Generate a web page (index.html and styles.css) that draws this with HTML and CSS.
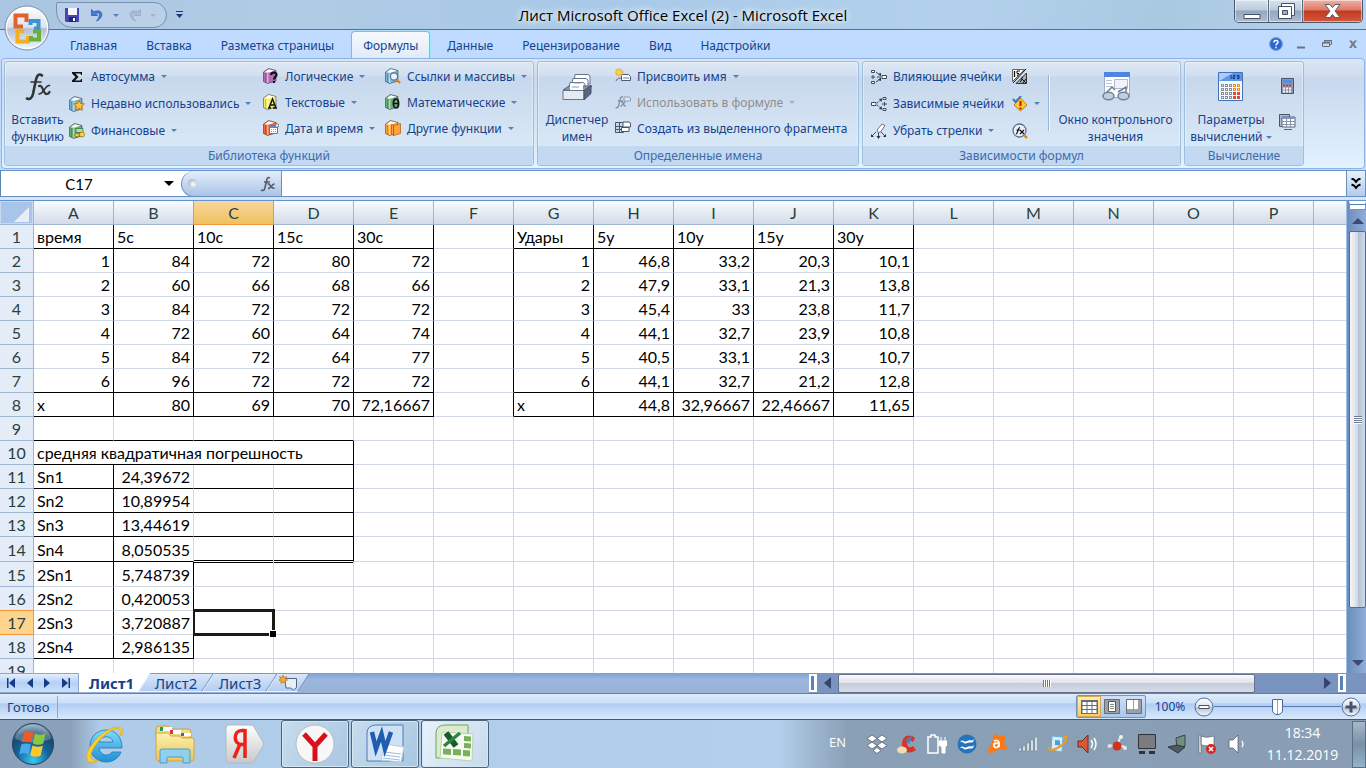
FILE: index.html
```html
<!DOCTYPE html>
<html lang="ru">
<head>
<meta charset="utf-8">
<title>Лист Microsoft Office Excel (2) - Microsoft Excel</title>
<link rel="stylesheet" href="styles.css">
</head>
<body>
<svg class="defs" aria-hidden="true">
  <defs>
    <linearGradient id="orb" x1="0" y1="0" x2="0" y2="1"><stop offset="0" stop-color="#fff"/><stop offset=".48" stop-color="#dbe3ee"/><stop offset=".52" stop-color="#b4c1d4"/><stop offset="1" stop-color="#f4f8fd"/></linearGradient>
    <radialGradient id="start" cx=".5" cy=".9" r=".9"><stop offset="0" stop-color="#38c8f0"/><stop offset=".45" stop-color="#12649c"/><stop offset=".75" stop-color="#1b486e"/><stop offset="1" stop-color="#8fb0c8"/></radialGradient>
    <linearGradient id="folder" x1="0" y1="0" x2="0" y2="1"><stop offset="0" stop-color="#fdf0b0"/><stop offset="1" stop-color="#e8c75c"/></linearGradient>
    <linearGradient id="silver" x1="0" y1="0" x2="0" y2="1"><stop offset="0" stop-color="#fff"/><stop offset="1" stop-color="#c6c8cc"/></linearGradient>
    <linearGradient id="ie" x1="0" y1="0" x2="0" y2="1"><stop offset="0" stop-color="#7fdcf8"/><stop offset="1" stop-color="#1e8ed6"/></linearGradient>
  </defs>
  <symbol id="book" viewBox="0 0 16 16"><path d="M.5 4 5.500.500l7.500 2V13l-8.500 2.500-4-2z" fill="currentColor" stroke="#000" stroke-opacity=".4"/><path d="M1.500 4.200 5.700 1.300l6 1.500L5 4.800z" fill="#fff"/><path d="M4.800 5.500v9.500" stroke="#fff" stroke-opacity=".7"/><path d="M2.500 5v9" stroke="#000" stroke-opacity=".2"/></symbol>
</svg>
<div class="app">
  <header class="titlebar">
    <div class="qat-wrap">
      <div class="qat">
        <button class="icon-btn" aria-label="Сохранить"><svg width="14" height="14" viewBox="0 0 14 14"><path d="M0 0h14v14H1l-1-1z" fill="#4a45b4"/><path d="M3 0h9v7H3z" fill="#f3f6ff"/><path d="M4 9h7v5H4z" fill="#222860"/><path d="M8 10h2v3H8z" fill="#fff"/></svg></button>
        <button class="icon-btn undo" aria-label="Отменить"><svg width="13" height="13" viewBox="0 0 13 13"><path d="M.5.500v6h6L4.700 4.800C8 2.500 10.500 6 5.500 12 13.500 8.500 12.500-1 3 2.700z" fill="#4a7ade" stroke="#2850a8" stroke-width=".7"/></svg></button>
        <i class="arrow"></i>
        <button class="icon-btn redo" aria-label="Вернуть" disabled><svg width="13" height="13" viewBox="0 0 13 13"><path d="M12.500.500v6h-6l1.800-1.700C5 2.500 2.500 6 7.500 12-.5 8.500.5-1 10 2.700z" fill="#a9bbd3" stroke="#8fa5c2" stroke-width=".7"/></svg></button>
        <i class="arrow dim"></i>
      </div>
      <button class="icon-btn" aria-label="Настройка панели"><svg width="7" height="8" viewBox="0 0 7 8"><path d="M0 0h7v1H0zM0 3h7L3.500 7z" fill="#1c3c78"/></svg></button>
    </div>
    <h1 class="title">Лист Microsoft Office Excel (2) - Microsoft Excel</h1>
    <div class="win-controls">
      <button aria-label="Свернуть"><svg width="18" height="16" viewBox="0 0 18 16"><path d="M1 11.500h16v4H1z" fill="#fff" stroke="#445064"/></svg></button>
      <button aria-label="Восстановить"><svg width="18" height="18" viewBox="0 0 18 18"><path d="M4.500 1.500h13v12h-13z" fill="#fff" stroke="#445064"/><path d="M1.500 4.500h13v12h-13z" fill="#fff" stroke="#445064"/><path d="M5.500 8.500h5v4h-5z" fill="#9fb1c5" stroke="#445064"/></svg></button>
      <button class="close" aria-label="Закрыть"><svg width="17" height="14" viewBox="0 0 17 14"><path d="M1 .5h5l2.500 3 2.500-3h5L11 7l5 6.500h-5l-2.500-3-2.500 3H1L6 7z" fill="#fff" stroke="#565e70"/></svg></button>
    </div>
    <button class="office" aria-label="Office"><svg width="46" height="46" viewBox="0 0 46 46"><circle cx="23" cy="23" r="22" fill="url(#orb)" stroke="#8090a8"/><circle cx="23" cy="23" r="20.500" fill="none" stroke="#fff"/><g fill="none" stroke-width="4"><path d="M19 21.500h-7.500v-11h11V17" stroke="#e5602a"/><path d="M26.500 20v-4h8v7.500H30" stroke="#3f94d0"/><path d="M20 26h-6.500v10.500H24V31" stroke="#f0b020"/><path d="M29 26.500h6v8h-8V31" stroke="#6ab038"/></g></svg></button>
  </header>
  <nav class="tabs">
    <button>Главная</button><button>Вставка</button><button>Разметка страницы</button><button class="active">Формулы</button><button>Данные</button><button>Рецензирование</button><button>Вид</button><button>Надстройки</button>
    <div class="doc-controls">
      <button aria-label="Справка"><svg width="14" height="14" viewBox="0 0 14 14"><circle cx="7" cy="7" r="6.500" fill="#2b67d4" stroke="#fff"/><circle cx="7" cy="7" r="6.500" fill="none" stroke="#2450a0" stroke-width=".6"/><path d="M4.800 5.500C5 2.500 9.500 3 9 5.500 8.500 6.800 7 6.800 7 8.500M7 9.700v1.600" stroke="#fff" stroke-width="1.500" fill="none"/></svg></button>
      <button aria-label="Свернуть книгу"><svg width="10" height="10" viewBox="0 0 10 10"><path d="M1 7.500h8v2H1z" fill="#6b7077"/></svg></button>
      <button aria-label="Восстановить книгу"><svg width="10" height="10" viewBox="0 0 10 10"><path d="M2.500 3V1.500h7v4H8M.5 3.500h7v4h-7z" fill="none" stroke="#6b7077"/><path d="M1 3h7v1.500H1zM2 1h8v1.500H2z" fill="#6b7077"/></svg></button>
      <button aria-label="Закрыть книгу"><svg width="10" height="10" viewBox="0 0 10 10"><path d="M1 1.500h2.500l1.500 2 1.500-2H9L6.300 5 9 9H6.500L5 6.500 3.500 9H1l2.700-4z" fill="#777c83"/></svg></button>
    </div>
  </nav>
  <div class="ribbon">
    <div class="panel">
      <section class="group g-lib">
        <div class="body">
          <button class="big"><svg width="30" height="30" viewBox="0 0 30 30"><g fill="none" stroke="#333" stroke-linecap="round"><path d="M19 3.500c-3-2.500-5 0-6 4L10 22c-1 4-3 6-6 4.500" stroke-width="2.600"/><path d="M8 10h10" stroke-width="1.600"/><path d="M16 14c4-2 4 9 8 8 1.500 0 2-1 2.500-2" stroke-width="2.200"/><path d="M26.500 13.500c-4-1-6 8.500-10.500 8.500" stroke-width="1.600"/></g></svg><span>Вставить<br>функцию</span></button>
          <div class="col wide">
            <button><svg width="16" height="16" viewBox="0 0 16 16"><path d="M3 3h10v3h-1l-.5-1.500h-5L9.500 8 6 11.500h5.500L12 10h1v3H3v-1.500L6.500 8 3 4.500z" fill="#111"/></svg>Автосумма<i class="arrow"></i></button>
            <button><svg class="c-blue" width="16" height="16" viewBox="0 0 16 16"><use href="#book"/><path d="m10 4 1.500 3.500 4 .3-3 2.600.9 4L10 12.200 6.500 14.400l1-4-3-2.600 4-.3z" fill="#ffc42c" stroke="#c06a10" stroke-width=".8"/></svg>Недавно использовались<i class="arrow"></i></button>
            <button><svg class="c-green" width="16" height="16" viewBox="0 0 16 16"><use href="#book"/><path d="M7 5.500h7v4H7z" fill="#b6dca0" stroke="#2b703c" stroke-width=".7"/><ellipse cx="8" cy="12" rx="2.500" ry="1.500" fill="#ffd24a" stroke="#8a6510" stroke-width=".7"/><ellipse cx="13" cy="11.500" rx="2.500" ry="2.500" fill="#ffd24a" stroke="#8a6510" stroke-width=".7"/></svg>Финансовые<i class="arrow"></i></button>
          </div>
          <div class="col">
            <button><svg class="c-purple" width="16" height="16" viewBox="0 0 16 16"><use href="#book"/><path d="M8 7c.5-3.500 6-3 5.500 0C13 9 11 9 11 11.500M11 13v2" stroke="#111" stroke-width="2.200" fill="none"/></svg>Логические<i class="arrow"></i></button>
            <button><svg class="c-yellow" width="16" height="16" viewBox="0 0 16 16"><use href="#book"/><path d="M5 14h3M10 14h4M6 14l3.500-9L13 14M7.500 11h4" stroke="#111" stroke-width="1.400" fill="none"/></svg>Текстовые<i class="arrow"></i></button>
            <button><svg class="c-red" width="16" height="16" viewBox="0 0 16 16"><use href="#book"/><path d="M6.500 5.500h8v8h-8z" fill="#fff" stroke="#567ab8"/><path d="M7 6h7v2H7z" fill="#5a8ad8"/><path d="M8 9.500h6M8 11.500h6" stroke="#7da0d8" stroke-dasharray="1 1"/><circle cx="14" cy="5.500" r="1.800" fill="#eee" stroke="#555" stroke-width=".7"/></svg>Дата и время<i class="arrow"></i></button>
          </div>
          <div class="col">
            <button><svg class="c-blue" width="16" height="16" viewBox="0 0 16 16"><use href="#book"/><circle cx="9" cy="8.500" r="3.600" fill="#e8f4fc" stroke="#5b7694" stroke-width="1.200"/><path d="m12 12 3 3" stroke="#e08020" stroke-width="2.400"/></svg>Ссылки и массивы<i class="arrow"></i></button>
            <button><svg class="c-green" width="16" height="16" viewBox="0 0 16 16"><use href="#book"/><ellipse cx="11" cy="9.500" rx="2.600" ry="4.500" fill="none" stroke="#111" stroke-width="1.700"/><path d="M9 9.500h4" stroke="#111" stroke-width="1.300"/></svg>Математические<i class="arrow"></i></button>
            <button><svg class="c-orange" width="16" height="16" viewBox="0 0 16 16"><use href="#book"/><path d="M6.500 4.500 8.500 5.500v10l-2-1.500zM8.500 5.500l7-2v10l-7 2z" fill="#ffa33a" stroke="#a85a10" stroke-width=".7"/></svg>Другие функции<i class="arrow"></i></button>
          </div>
        </div>
        <h2>Библиотека функций</h2>
      </section>
      <section class="group g-names">
        <div class="body">
          <button class="big"><svg width="30" height="30" viewBox="0 0 30 30"><g fill="#fff" stroke="#65748c"><path d="M13 2.500h13l2 1.500v8H12z"/><path d="M11 6.500h13l2 1.500v7H9z"/><path d="M8 10.500h13l2 1.500v7H6z"/></g><path d="M1 18 7 14h23l-7 5z" fill="#8895aa" stroke="#55637b"/><path d="M8 12h13v6H8z" fill="#fff"/><path d="M1 18.500h21v9H1z" fill="#e6ebf3" stroke="#66748c"/><path d="m22 18.500 7-5v8l-7 6.500z" fill="#58657c" stroke="#44516a"/><path d="M10 15h7M12 11h7" stroke="#8a98ae"/></svg><span>Диспетчер<br>имен</span></button>
          <div class="col">
            <button><svg width="16" height="16" viewBox="0 0 16 16"><path d="M6.500 6.500h7l2 2v4h-9z" fill="#fff" stroke="#4e5d74"/><path d="M8 10h6" stroke="#6a7c98"/><path d="m4 0 1 2.500L7 1 6.500 3.500 9 4 6.500 5 7 7.500 5 6 4 8.500 3 6 1 7.500 1.500 5-.5 4l2-.5L1 1l2 1.500z" fill="#ffd33c" stroke="#d89a18" stroke-width=".5"/><path d="M1 13c2-4 3-2 5-3" stroke="#55637a" fill="none"/></svg>Присвоить имя<i class="arrow"></i></button>
            <button disabled><svg width="16" height="16" viewBox="0 0 16 16"><path d="M8 3C6 2 5.500 4 5 6l-1.500 6C3 14 2 14 .5 13.500M3 7h5M6 8c3-1 2 5 5 4M10.500 8C8 8 8 12 5.500 12.500" stroke="#8290a8" stroke-width="1.300" fill="none"/><path d="M9 3h5l1.500 1v3H9z" fill="#dfe6f0" stroke="#8d9bb4"/></svg>Использовать в формуле<i class="arrow dim"></i></button>
            <button><svg width="16" height="16" viewBox="0 0 16 16"><path d="M.5 2.500h8v4h-8zM.5 6.500h8v6h-8zM4.500 2.500v10M.5 9.500h8" fill="#c9d6e8" stroke="#46566e"/><path d="M8 2h6l1.500 1v4H8zM6.500 7.500H14v4H6.500z" fill="#fff" stroke="#46566e"/></svg>Создать из выделенного фрагмента</button>
          </div>
        </div>
        <h2>Определенные имена</h2>
      </section>
      <section class="group g-audit">
        <div class="body">
          <div class="col wide">
            <button><svg width="16" height="16" viewBox="0 0 16 16"><path d="M.5 1.500h3v2h-3zM.5 12.500h3v2h-3zM11 6.500h4.500v3H11zM0 8h4M2 6v4" fill="#fff" stroke="#3c4c64"/><path d="m5 3 5 4M5 13l5-4M6 8h4" stroke="#3c4c64" fill="none"/><path d="m7 5 3 2 0-3zM7 11l3-2v3z" fill="#26354c"/></svg>Влияющие ячейки</button>
            <button><svg width="16" height="16" viewBox="0 0 16 16"><path d="M.5 6.500H5v3H.500zM12 1.500h3v2h-3zM12 12.500h3v2h-3zM11 8h5M13.500 6v4" fill="#fff" stroke="#3c4c64"/><path d="m6 7 5-4M6 9l5 4" stroke="#3c4c64" stroke-dasharray="2 1" fill="none"/><path d="m8 3 3-.5L10.500 6zM8 13l3 .5-.5-3.500z" fill="#26354c"/></svg>Зависимые ячейки</button>
            <button><svg width="16" height="16" viewBox="0 0 16 16"><path d="m6 7 5-6 3 1.500L9.500 9 7 9.500z" fill="#fff" stroke="#65748c"/><path d="M5 9 1 13M7.500 10v5M10 9l4 4" stroke="#3c4c64" fill="none"/><path d="M0 11v3h3zM5.500 13h4l-2 3zM12 14h3v-3z" fill="#26354c"/></svg>Убрать стрелки<i class="arrow"></i></button>
          </div>
          <div class="col wide icons">
            <button aria-label="Показать формулы"><svg width="16" height="16" viewBox="0 0 16 16"><path d="M.5.500h12l-12 12z" fill="#fff" stroke="#666"/><path d="M4 14.500h10.500V4z" fill="#a9adb3" stroke="#333"/><path d="M2.500 2v6" stroke="#111" stroke-width="1.300"/><path d="M8 2H5v2.500h2L5 7" stroke="#111" fill="none"/><path d="M14 0 1 14" stroke="#111"/><path d="M8 13c2 0 1-5 3-5M10 10l4 4M14 10l-3 4" stroke="#111" fill="none"/></svg></button>
            <button aria-label="Проверка наличия ошибок"><svg width="16" height="16" viewBox="0 0 16 16"><path d="m8.500 2 6.500 7-6.500 6L2 9z" fill="#ffcb2e" stroke="#b98010"/><path d="M8.500 5v5M8.500 11.500v2" stroke="#d01c10" stroke-width="2.200"/><path d="m1 3 2.500 3L9 0" stroke="#3d78c8" stroke-width="2" fill="none"/></svg><i class="arrow"></i></button>
            <button aria-label="Вычислить формулу"><svg width="16" height="16" viewBox="0 0 16 16"><circle cx="7.500" cy="7.500" r="6.500" fill="#e8f1fb" stroke="#5c7290" stroke-width="1.300"/><path d="M4 11c2 0 1.500-6.500 4-6.500M4.500 7H8M8 7l4 4M12 7l-4 4" stroke="#111" fill="none" stroke-width="1.200"/><path d="m12.500 12.500 2.500 2.500" stroke="#e08020" stroke-width="2.400"/></svg></button>
          </div>
          <button class="big ruled"><svg width="30" height="30" viewBox="0 0 30 30"><path d="M3.500.5h25v25h-25z" fill="#fff" stroke="#9db0cc"/><path d="M3 0h26v5H3z" fill="#4c86e0"/><path d="M5 8.500h6M5 11.500h6M5 14.500h6" stroke="#b8c4d4"/><path d="M13.500 7.500h13v9h-13z" fill="#f0f3f8" stroke="#b0bccb"/><path d="M5 21 11 15l3 3M17 20l8-5v6" stroke="#6f7c90" stroke-width="1.500" fill="none"/><ellipse cx="7.500" cy="24" rx="5.500" ry="3.800" fill="#bfd0de" stroke="#708296" stroke-width="1.500"/><ellipse cx="22.500" cy="24" rx="5.500" ry="3.800" fill="#bfd0de" stroke="#708296" stroke-width="1.500"/></svg><span>Окно контрольного<br>значения</span></button>
        </div>
        <h2>Зависимости формул</h2>
      </section>
      <section class="group g-calc">
        <div class="body">
          <button class="big"><svg width="26" height="30" viewBox="0 0 26 30"><path d="M.5.500h24v28H.500z" fill="#f6f9ff" stroke="#4470b8"/><path d="M1 1h23v8H1z" fill="#5b98ec"/><path d="M1 1h14L1 9z" fill="#a9cdf8"/><path d="M13 3v4M15 3.500h2V5h-2v1.500h2M19 3.500h2v3h-2M19 5h2" stroke="#18386e" fill="none"/><g fill="none" stroke-width="3" stroke-dasharray="3 1"><path d="M3 13.500h12M3 17.500h12M3 21.500h12M3 25.500h12" stroke="#8a8f9c"/><path d="M15 13.500h8M15 17.500h8" stroke="#e89030"/><path d="M15 21.500h8M15 25.500h8" stroke="#d85030"/></g><path d="M4 13.500h1M8 13.500h1M12 13.500h1M16 13.500h1M20 13.500h1M4 17.500h1M8 17.500h1M12 17.500h1M16 17.500h1M20 17.500h1M4 21.500h1M8 21.500h1M12 21.500h1M4 25.500h1M8 25.500h1M12 25.500h1" stroke="#fff" fill="none"/></svg><span>Параметры<br>вычислений <i class="arrow"></i></span></button>
          <div class="stack">
            <button class="icon-btn" aria-label="Пересчет"><svg width="13" height="16" viewBox="0 0 13 16"><path d="M.5.500h12v15H.500z" fill="#8c96ac" stroke="#4a5670"/><path d="M2 2h9v3H2z" fill="#4f8fe6"/><path d="M2 7.500h9" stroke="#c43c40" stroke-width="2" stroke-dasharray="2 1"/><path d="M2 10.500h9M2 13.500h9" stroke="#f1f4fa" stroke-width="2" stroke-dasharray="2 1"/></svg></button>
            <button class="icon-btn" aria-label="Произвести вычисления"><svg width="17" height="16" viewBox="0 0 17 16"><path d="M.5.500h10v12H.500z" fill="#aebbd0" stroke="#4a5670"/><path d="M3 3h13v10H3z" fill="#fff" stroke="#55637b"/><path d="M3 3h13v2H3z" fill="#7998cc"/><path d="M3 7.500h13M3 10.500h13M7.500 3v10M11.500 3v10" stroke="#8593aa"/><path d="M5 15.500h8" stroke="#55637b"/></svg></button>
          </div>
        </div>
        <h2>Вычисление</h2>
      </section>
    </div>
  </div>
  <div class="formula-bar">
    <div class="name-box"><input aria-label="Имя" value="C17"><i class="arrow black"></i></div>
    <div class="fx"><span class="knob"></span><button class="icon-btn" aria-label="Вставить функцию"><svg width="16" height="16" viewBox="0 0 16 16"><path d="M10 2C7.500.5 7 3 6.500 5L5 11.500C4.500 14.500 3 15 1 14M4 6h6M7.500 8c3-1.500 2.500 5.500 7 4M14.500 8c-3 0-3 4.500-6.500 4.500" stroke="#555c66" stroke-width="1.600" fill="none"/></svg></button></div>
    <input class="formula" aria-label="Строка формул">
    <button class="expand" aria-label="Развернуть"><svg width="10" height="12" viewBox="0 0 10 12"><path d="m.5.500 2.500 1L5 4l2-2.500 2.500-1M.5 6.500l2.500 1L5 10l2-2.500 2.500-1" stroke="#000" stroke-width="2" fill="none"/></svg></button>
  </div>
  <main class="work">
    <div class="sheet">
      <table>
        <thead><tr><th class="corner"><svg width="15" height="15" viewBox="0 0 15 15"><path d="M15 0v15H0z" fill="#e9eef6"/></svg><th>A<th>B<th class="sel">C<th>D<th>E<th>F<th>G<th>H<th>I<th>J<th>K<th>L<th>M<th>N<th>O<th>P<th></thead>
        <tbody>
        <tr class="t"><th>1<td class="k b">время<td class="k b">5с<td class="k b">10с<td class="k b">15с<td class="k b">30с<td class="k"><td class="k b">Удары<td class="k b">5у<td class="k b">10у<td class="k b">15у<td class="k b">30у<td><td><td><td><td><td>
        <tr><th>2<td class="k">1<td class="k">84<td class="k">72<td class="k">80<td class="k">72<td class="k"><td class="k">1<td class="k">46,8<td class="k">33,2<td class="k">20,3<td class="k">10,1<td><td><td><td><td><td>
        <tr><th>3<td class="k">2<td class="k">60<td class="k">66<td class="k">68<td class="k">66<td class="k"><td class="k">2<td class="k">47,9<td class="k">33,1<td class="k">21,3<td class="k">13,8<td><td><td><td><td><td>
        <tr><th>4<td class="k">3<td class="k">84<td class="k">72<td class="k">72<td class="k">72<td class="k"><td class="k">3<td class="k">45,4<td class="k">33<td class="k">23,8<td class="k">11,7<td><td><td><td><td><td>
        <tr><th>5<td class="k">4<td class="k">72<td class="k">60<td class="k">64<td class="k">74<td class="k"><td class="k">4<td class="k">44,1<td class="k">32,7<td class="k">23,9<td class="k">10,8<td><td><td><td><td><td>
        <tr><th>6<td class="k">5<td class="k">84<td class="k">72<td class="k">64<td class="k">77<td class="k"><td class="k">5<td class="k">40,5<td class="k">33,1<td class="k">24,3<td class="k">10,7<td><td><td><td><td><td>
        <tr><th>7<td class="k b">6<td class="k b">96<td class="k b">72<td class="k b">72<td class="k b">72<td class="k"><td class="k b">6<td class="k b">44,1<td class="k b">32,7<td class="k b">21,2<td class="k b">12,8<td><td><td><td><td><td>
        <tr><th>8<td class="k b l">x<td class="k b">80<td class="k b">69<td class="k b">70<td class="k b">72,16667<td class="k"><td class="k b l">x<td class="k b">44,8<td class="k b">32,96667<td class="k b">22,46667<td class="k b">11,65<td><td><td><td><td><td>
        <tr><th>9<td class="b"><td class="b"><td class="b"><td class="b"><td><td><td><td><td><td><td><td><td><td><td><td><td>
        <tr><th>10<td class="k b l" colspan="4">средняя квадратичная погрешность<td><td><td><td><td><td><td><td><td><td><td><td><td>
        <tr><th>11<td class="k b l">Sn1<td class="b">24,39672<td class="b"><td class="k b"><td><td><td><td><td><td><td><td><td><td><td><td><td>
        <tr><th>12<td class="k b l">Sn2<td class="b">10,89954<td class="b"><td class="k b"><td><td><td><td><td><td><td><td><td><td><td><td><td>
        <tr><th>13<td class="k b l">Sn3<td class="b">13,44619<td class="b"><td class="k b"><td><td><td><td><td><td><td><td><td><td><td><td><td>
        <tr class="tall"><th>14<td class="k b l">Sn4<td class="b">8,050535<td class="dbl"><td class="k dbl"><td><td><td><td><td><td><td><td><td><td><td><td><td>
        <tr class="tall"><th>15<td class="k l">2Sn1<td class="k">5,748739<td class="dbl-under"><td class="dbl-under"><td><td><td><td><td><td><td><td><td><td><td><td><td>
        <tr><th>16<td class="k l">2Sn2<td class="k">0,420053<td><td><td><td><td><td><td><td><td><td><td><td><td><td><td>
        <tr><th class="sel">17<td class="k l">2Sn3<td class="k">3,720887<td class="cursor"><td><td><td><td><td><td><td><td><td><td><td><td><td><td>
        <tr><th>18<td class="k b l">2Sn4<td class="k b">2,986135<td><td><td><td><td><td><td><td><td><td><td><td><td><td><td>
        <tr><th>19<td><td><td><td><td><td><td><td><td><td><td><td><td><td><td><td><td>
        </tbody>
      </table>
    </div>
    <div class="vscroll">
      <span class="split-h"></span>
      <button aria-label="Вверх"><svg width="12" height="6" viewBox="0 0 12 6"><path d="M0 6 6 0l6 6z" fill="#3c4a72"/></svg></button>
      <div class="vthumb"><span class="grip"></span></div>
      <span class="vtrack"></span>
      <button aria-label="Вниз"><svg width="12" height="6" viewBox="0 0 12 6"><path d="m0 0 6 6 6-6z" fill="#3c4a72"/></svg></button>
    </div>
  </main>
  <div class="sheet-bar">
    <div class="sheet-nav">
      <button aria-label="Первый лист"><svg width="8" height="10" viewBox="0 0 8 10"><path d="M0 0h1.500v10H0zM8 0v10L2 5z" fill="#153a8a"/></svg></button>
      <button aria-label="Предыдущий лист"><svg width="6" height="10" viewBox="0 0 6 10"><path d="M6 0v10L0 5z" fill="#153a8a"/></svg></button>
      <button aria-label="Следующий лист"><svg width="6" height="10" viewBox="0 0 6 10"><path d="M0 0v10l6-5z" fill="#153a8a"/></svg></button>
      <button aria-label="Последний лист"><svg width="8" height="10" viewBox="0 0 8 10"><path d="M6.500 0H8v10H6.500zM0 0v10l6-5z" fill="#153a8a"/></svg></button>
    </div>
    <div class="sheet-tabs">
      <button class="on">Лист1</button><button>Лист2</button><button>Лист3</button><button class="new" aria-label="Новый лист"><svg width="18" height="16" viewBox="0 0 18 16"><path d="M5.500 3.500h12v9l-3 2.500-3-2H7z" fill="#e8eef8" stroke="#5a6680"/><path d="m4 0 1 2.500L7.500 1.500 6.500 4l2 1-2.500 1 .5 2.500L4 7 2 8.500 2 6-.5 5l2-1L.5 1.500 3 2.500z" fill="#f5a93a" stroke="#b06a14" stroke-width=".6"/></svg></button>
    </div>
    <div class="hscroll">
      <span class="split-v"></span>
      <button aria-label="Влево"><svg width="7" height="12" viewBox="0 0 7 12"><path d="M7 0v12L0 6z" fill="#34446e"/></svg></button>
      <div class="htrack"><div class="hthumb"><span class="grip"></span></div></div>
      <button aria-label="Вправо"><svg width="7" height="12" viewBox="0 0 7 12"><path d="M0 0v12l7-6z" fill="#34446e"/></svg></button>
      <span class="split-v"></span>
    </div>
  </div>
  <footer class="status">
    <span class="ready">Готово</span>
    <div class="views">
      <button class="on" aria-label="Обычный"><svg width="17" height="14" viewBox="0 0 17 14"><path d="M0 0h17v14H0z" fill="#676d78"/><path d="M1.500 2h4v3h-4zM6.500 2h4v3h-4zM11.500 2h4v3h-4zM1.500 6h4v3h-4zM6.500 6h4v3h-4zM11.500 6h4v3h-4zM1.500 10h4v3h-4zM6.500 10h4v3h-4zM11.500 10h4v3h-4z" fill="#fff"/></svg></button>
      <button aria-label="Разметка страницы"><svg width="16" height="15" viewBox="0 0 16 15"><path d="M.5.500h15v14H.500z" fill="#9a9fa8" stroke="#666c78"/><path d="M4.500 2.500h7v10h-7z" fill="#fff" stroke="#555"/><path d="M6 5.500h4M6 7.500h4M6 9.500h4" stroke="#888"/></svg></button>
      <button aria-label="Страничный режим"><svg width="16" height="15" viewBox="0 0 16 15"><path d="M.5.500h15v14H.500z" fill="#9a9fa8" stroke="#666c78"/><path d="M1 1h6v9H1zM8 1h4v9H8z" fill="#fff"/></svg></button>
    </div>
    <button class="pct">100%</button>
    <button class="zoom-btn" aria-label="Уменьшить"><svg width="20" height="20" viewBox="0 0 20 20"><circle cx="10" cy="10" r="9" fill="url(#orb)" stroke="#56709c"/><path d="M5 8.500h10v3H5z" fill="#fff" stroke="#45546c"/></svg></button>
    <input class="zoom" type="range" min="0" max="100" value="50" aria-label="Масштаб">
    <button class="zoom-btn" aria-label="Увеличить"><svg width="20" height="20" viewBox="0 0 20 20"><circle cx="10" cy="10" r="9" fill="url(#orb)" stroke="#56709c"/><path d="M10 4.500v11M4.500 10h11" stroke="#45546c" stroke-width="3"/></svg></button>
  </footer>
  <div class="taskbar">
    <button class="start" aria-label="Пуск"><svg width="44" height="44" viewBox="0 0 44 44"><circle cx="22" cy="22" r="20.500" fill="url(#start)" stroke="#24405c"/><path d="M4 17a18.500 18.500 0 0 1 36 0q-18 7-36 0z" fill="#fff" opacity=".25"/><path d="M13 10.500c3.500-1.500 6.500-1.500 9.500.2L20.300 20.500c-3-1.500-6-1.500-9.500 0z" fill="#ee5a28"/><path d="M24 11.500c3.500 1.700 7 1.700 10.500 0l-2.200 10c-3.500 1.700-7 1.700-10.500 0z" fill="#8cc83c"/><path d="M10.300 22.500c3.500-1.500 6.500-1.500 9.500 0l-2.200 10c-3-1.700-6-1.700-9.500 0z" fill="#48a8e8"/><path d="M21.400 23.500c3.500 1.700 7 1.700 10.500 0l-2.200 10c-3.500 1.700-7 1.700-10.500 0z" fill="#fcc82c"/></svg></button>
    <button class="app-btn" aria-label="Internet Explorer"><svg width="40" height="40" viewBox="0 0 40 40"><path d="M37 24c0-12-7-18-16-18S5 13 5 22s7 16 16 16c7 0 13-4 15-10h-9c-3 5-12 4-13-4zM14 18c1-7 13-7 14 0z" fill="url(#ie)" fill-rule="evenodd" stroke="#1c78bc" stroke-width=".8"/><path d="M37 11c3-9-5-10-14-5C12 12 0 26 2 35c1 5 7 4 12 1-5 1-8 0-8-4C6 25 15 14 24 8c7-5 13-5 11 3z" fill="#fbd02c" stroke="#d8a010" stroke-width=".6"/></svg></button>
    <button class="app-btn" aria-label="Проводник"><svg width="42" height="40" viewBox="0 0 42 40"><path d="M2 5q0-3 3-3h9l3 3h17q3 0 3 3v6H2z" fill="#f3dc88" stroke="#c8a040"/><path d="M8 3h10v4H8zM18 6h9v4h-9zM29 9h8v3h-8z" fill="#fff"/><path d="M6 3h3v4H6z" fill="#2b9a48"/><path d="M16 6h3v4h-3z" fill="#d83b28"/><path d="M27 9h3v3h-3z" fill="#2b70c8"/><path d="M2 9h12l3 3h9l2 2h10q2 0 2 2v18q0 3-3 3H5q-3 0-3-3z" fill="url(#folder)" stroke="#d0a848"/><path d="M6 39V27q0-2 2-2h26q2 0 2 2v12h-7v-5q0-1-1-1H14q-1 0-1 1v5z" fill="#8ed0ee" stroke="#4e9fc8"/></svg></button>
    <button class="app-btn" aria-label="Яндекс"><svg width="40" height="40" viewBox="0 0 40 40"><path d="M4 1h22q2 0 3 2l9 15q1 2 0 4l-9 15q-1 2-3 2H4q-3 0-3-3V4q0-3 3-3z" fill="url(#silver)" stroke="#b3b8c0"/><path d="M20 5v29M20 6.500h-3c-9 0-9 14 0 14h3M15 20 9 34" stroke="#f02018" stroke-width="3.500" fill="none"/></svg></button>
    <div class="running">
      <button aria-label="Яндекс Браузер"><svg width="40" height="40" viewBox="0 0 40 40"><circle cx="20" cy="20" r="19" fill="#f7f7f7" stroke="#b5bcc4"/><path d="m9 10 11 12L31 10M20 21v16" stroke="#d8101c" stroke-width="5" fill="none"/></svg></button>
      <button aria-label="Word"><svg width="40" height="40" viewBox="0 0 40 40"><path d="M2 9q0-7 8-8h28v36H2z" fill="#cfe2f5" stroke="#4a7cbc"/><path d="m20 20 19 3-3 15-20-2z" fill="#fff" stroke="#b8cce0"/><path d="m19 28 17 2M18 31l17 2M18 34l17 2" stroke="#9bbce0"/><path d="m7 8 4 17 5.500-15L20 25l6-17" stroke="#205cb0" stroke-width="4.500" fill="none"/></svg></button>
      <button class="front" aria-label="Excel"><svg width="40" height="40" viewBox="0 0 40 40"><path d="M1 9q0-7 8-8h24v33H1z" fill="#dcebd0" stroke="#6ca84c"/><path d="m7 8 31 2-1 27-32-3z" fill="#f5faf0" stroke="#b8d4a8"/><path d="m29 12 7 .5v5l-7-.5zM29 19l7 .5v5l-7-.5zM28 26l7 .5v6l-7-.5zM18 25l8 .5v6l-8-.5zM8 24.500l8 .5v6l-8-.7z" fill="#78b05c"/><path d="m11 9 10 13" stroke="#145c2c" stroke-width="6"/><path d="M25 9 9 22" stroke="#2c8440" stroke-width="3.500"/></svg></button>
    </div>
    <div class="tray">
      <span class="lang">EN</span>
      <div class="tray-icons">
        <svg viewBox="0 0 20 20"><path d="m5 1 5 3.500L5 8 0 4.500zM15 1l5 3.500L15 8l-5-3.500zM5 8l5 3.500L5 15l-5-3.500zM15 8l5 3.500-5 3.500-5-3.500zM10 13.500l4 3-4 3-4-3z" fill="#fff" stroke="#56616e" stroke-width=".8"/></svg>
        <svg viewBox="0 0 20 20"><path d="M18 4C12-1 5 2 5 10s8 11 14 6l-3-4c-4 3-6 0-6-3s3-4 6-1z" fill="#d83424"/><path d="m8 6 8-5-4 9z" fill="#4a80b8"/><ellipse cx="5" cy="16" rx="5" ry="3.500" fill="#f2dcb4"/></svg>
        <svg viewBox="0 0 20 20"><path d="M4 1h4v2h3v16H1V3h3z" fill="#8ba0b6" stroke="#fff" stroke-width="1.500"/><path d="M14 3v4M18 3v4M12 7h8v4l-2 2v6h-3v-6l-3-2z" stroke="#fff" fill="#fff"/></svg>
        <svg viewBox="0 0 20 20"><circle cx="10" cy="10" r="9.500" fill="#2474bc"/><path d="M3 8c3-4 4 1 7-1s4 1 7-2c-1 6-4 2-7 4s-4-2-7-1zM3 14c3-4 4 1 7-1s4 1 7-2c-1 6-4 2-7 4s-4-2-7-1z" fill="#fff"/></svg>
        <svg viewBox="0 0 20 20"><path d="M7 1q2-2 4 1l6-1q2 0 1 3l-1 4 3 5q0 3-3 3l-5-1-7 4q-4 1-4-3l3-6z" fill="#ff7812"/><path d="M7 7c2-1 5-1 5 2v4M12 9c-3 0-6 0-5 3s4 1 5 0" stroke="#fff" stroke-width="1.800" fill="none"/></svg>
        <svg viewBox="0 0 20 20"><path d="M2 14h2v3H2zM6 12h2v5H6zM10 9h2v8h-2zM14 6h2v11h-2zM18 3h2v14h-2z" fill="#fff" stroke="#66788a" stroke-width=".5"/></svg>
        <svg viewBox="0 0 20 20"><path d="m5 2 11 1-1 15-11-2z" fill="#d5edf8" stroke="#68b0d4"/><path d="m8 6 5 .5v5L8 11z" fill="#48a0d8"/><path d="M2 13c-1 5 8 3 14-3s4-9 0-6" fill="none" stroke="#f29a24" stroke-width="2.200"/></svg>
        <svg viewBox="0 0 20 20"><path d="M1 7h4l6-6v18l-6-6H1z" fill="#d95736" stroke="#6a3020"/><path d="M14 6q3 4 0 8M17 4q4 6 0 12" stroke="#fff" stroke-width="1.500" fill="none"/></svg>
        <svg viewBox="0 0 20 20"><path d="m14 2-4 9 8 2M10 11l-8 1" stroke="#e8ecf0" stroke-width="2" fill="none"/><circle cx="10" cy="12" r="4.500" fill="#d4301c"/><circle cx="14" cy="3" r="2" fill="#eee"/><circle cx="2.500" cy="12" r="2" fill="#ddd"/><circle cx="18" cy="14" r="2" fill="#e8e8e8"/></svg>
        <svg viewBox="0 0 20 20"><path d="M1.500.500h17v14h-17z" fill="#7c7c7e" stroke="#303438"/><path d="M2 17h6v3H2zM12 17h6v3h-6z" fill="#303438"/></svg>
        <svg viewBox="0 0 20 20"><path d="m9 4 9-3v11l-8 3z" fill="#6e9080" stroke="#3c4448"/><path d="m1 13 9-2 8 2-7 6z" fill="#505860" stroke="#30383e"/></svg>
        <svg viewBox="0 0 20 20"><path d="M2 1h2v18H2zM4 2q5 2 8 1l5-1v9q-6 2-13 0z" fill="#fff" stroke="#4a5662" stroke-width=".6"/><circle cx="14" cy="15" r="5" fill="#d42820"/><path d="m12 13 4 4M16 13l-4 4" stroke="#fff" stroke-width="1.500"/></svg>
        <svg viewBox="0 0 20 20"><path d="M2 6h4l5-5v18l-5-5H2z" fill="#fff" stroke="#4a5662" stroke-width=".7"/><path d="M15 7q2 3 0 6" stroke="#fff" stroke-width="1.300" fill="none"/></svg>
      </div>
      <div class="clock"><span>18:34</span><span>11.12.2019</span></div>
      <button class="desktop" aria-label="Свернуть все окна"></button>
    </div>
  </div>
</div>
</body>
</html>
```
FILE: styles.css
```css
* { box-sizing: border-box; }

body {
  margin: 0;
  font-family: "Noto Sans", "Open Sans", sans-serif;
  font-size: 12px;
  color: #15428b;
}

button {
  border: 0;
  padding: 0;
  margin: 0;
  background: none;
  font: inherit;
  color: inherit;
}

svg { display: block; flex: none; }
.defs { position: absolute; width: 0; height: 0; }

.app {
  display: flex;
  flex-direction: column;
  height: 100vh;
  overflow: hidden;
}

.arrow {
  display: inline-block;
  flex: none;
  width: 0;
  height: 0;
  border: 3px solid transparent;
  border-top-color: #4f80c0;
  border-bottom-width: 0;
}
.arrow.dim { border-top-color: #b3b0b0; }
.arrow.black { border-width: 5px 5px 0; border-top-color: #000; }
.icon-btn { display: flex; align-items: center; justify-content: center; }

/* Title bar */
.titlebar {
  position: relative;
  display: grid;
  grid-template-columns: 1fr auto 1fr;
  height: 30px;
  flex: none;
  background: linear-gradient(100deg, #a9c5df 0, #b0cbe5 20%, #a8c9e8 45%, #b3d1ec 70%, #a9c8e2 85%, #b8d4ee 100%);
  border-bottom: 1px solid #56718c;
}
.qat-wrap { display: flex; align-items: center; gap: 9px; padding-left: 56px; }
.qat {
  display: flex;
  align-items: center;
  height: 26px;
  padding: 0 10px 0 8px;
  border: 1px solid #7890ab;
  border-radius: 2px 13px 13px 16px;
  background: #b9d0e8;
}
.undo { margin-left: 12px; margin-right: 9px; }
.redo { margin-left: 9px; margin-right: 9px; }
.title {
  margin: 0;
  font-size: 15px;
  line-height: 30px;
  font-weight: 400;
  color: #000;
  text-shadow: 0 0 6px #fff, 0 0 10px #fff;
  font-family: "Open Sans", "Noto Sans", sans-serif;
}
.win-controls {
  justify-self: end;
  display: flex;
  height: 23px;
  margin-right: 3px;
  border: 1px solid #4c5a6c;
  border-top: 0;
  border-radius: 0 0 5px 5px;
  overflow: hidden;
}
.win-controls button {
  display: flex;
  align-items: center;
  justify-content: center;
  width: 34px;
  border-right: 1px solid #5c6b7e;
  background: linear-gradient(#d6e2ee 0, #bccbdb 45%, #93a7bd 50%, #a9bfd5 100%);
  box-shadow: inset 0 0 0 1px rgba(255, 255, 255, .5);
}
.win-controls .close {
  width: 59px;
  border-right: 0;
  background: linear-gradient(#eeb0a4 0, #dd7a68 45%, #c03a20 50%, #d4583c 100%);
}
.office { position: absolute; left: 4px; top: 5px; z-index: 2; border-radius: 50%; }

/* Ribbon tabs */
.tabs {
  display: flex;
  align-items: flex-end;
  gap: 5px;
  height: 28px;
  flex: none;
  padding-left: 58px;
  background: #bfdbff;
}
.tabs > button { height: 27px; padding: 2px 12px 0; }
.tabs > .active {
  border: 1px solid #8db2e3;
  border-bottom: 0;
  border-radius: 4px 4px 0 0;
  padding: 1px 11px 0;
  background: linear-gradient(#f5f9fe, #e0ebf8);
  box-shadow: 1px 0 2px #8ff0ff;
}
.doc-controls { display: flex; align-items: center; height: 28px; gap: 16px; margin-left: auto; padding-right: 8px; }
.doc-controls button:first-child { margin-right: -3px; }

/* Ribbon */
.ribbon { flex: none; background: #bfdbff; padding: 0 1px 1px; border-bottom: 1px solid #6593cf; }
.panel {
  display: flex;
  gap: 3px;
  padding: 2px;
  border: 1px solid #8db2e3;
  border-radius: 4px;
  background: linear-gradient(#dbe6f4 0, #cfdded 16%, #c8d8ed 17%, #e3f2ff 100%);
}
.group {
  display: flex;
  flex-direction: column;
  border: 1px solid #9ebfdb;
  border-radius: 3px;
  background: linear-gradient(#dde8f5 0, #d2dfef 13%, #c7d8ed 15%, #d9e8f6 82%);
  box-shadow: inset 0 0 0 1px rgba(255, 255, 255, .35);
}
.group h2 {
  margin: 0;
  height: 19px;
  font-size: 12px;
  line-height: 20px;
  font-weight: 400;
  text-align: center;
  color: #3e6aaa;
  background: #c2d9f1;
}
.body { display: grid; height: 84px; }
.big {
  display: flex;
  flex-direction: column;
  align-items: center;
  gap: 9px;
  padding-top: 9px;
  line-height: 17px;
}
.big svg { height: 30px; }
.big .arrow { margin-bottom: 2px; }
.col { display: flex; flex-direction: column; }
.col button { display: flex; align-items: center; gap: 6px; height: 26px; white-space: nowrap; text-align: left; }
.col.wide button { height: 27px; }
.col button:disabled { color: #8d8d8d; }
.g-lib .body { grid-template-columns: 63px 194px 122px 146px; padding: 1px 2px 0 1px; }
.g-names .body { grid-template-columns: 76px 242px; padding: 1px 1px 0; }
.g-audit .body { grid-template-columns: 141px 36px 131px; padding: 1px 1px 0 8px; }
.g-calc .body { grid-template-columns: 90px 26px; padding: 1px 1px 0; }
.ruled { position: relative; padding-left: 4px; }
.ruled::before { content: ""; position: absolute; left: 0; top: 12px; width: 1px; height: 56px; background: #9ab5d6; box-shadow: 1px 0 #f0f6fd; }
.stack { display: flex; flex-direction: column; align-items: center; gap: 20px; padding-top: 15px; padding-right: 3px; }
.c-blue { color: #78b4d8; }
.c-green { color: #68ac78; }
.c-purple { color: #b46cb4; }
.c-yellow { color: #f4ec70; }
.c-red { color: #e8683c; }
.c-orange { color: #ffa33a; }

/* Formula bar */
.formula-bar {
  display: flex;
  height: 30px;
  flex: none;
  border-bottom: 1px solid #6593cf;
  padding-bottom: 3px;
  background: #d5e4f7;
}
.name-box { display: flex; align-items: center; width: 195px; padding-right: 21px; background: #fff; border-left: 1px solid #5c86b8; border-bottom: 1px solid #6a8fbb; }
.name-box input { width: 156px; border: 0; padding: 0; margin-right: 7px; text-align: center; font: 15px Lato, sans-serif; color: #000; background: none; }
.fx {
  display: flex;
  align-items: center;
  justify-content: space-between;
  width: 101px;
  margin-left: -14px;
  padding: 0 5px 0 6px;
  border: 1px solid #6a8fbb;
  border-top: 0;
  border-radius: 13px 0 0 13px;
  background: linear-gradient(#e4eefb, #a9c4e8);
}
.knob { width: 9px; height: 9px; border-radius: 50%; background: radial-gradient(circle at 60% 60%, #fff, #8ea0b8); }
.formula { flex: 1; min-width: 0; border: 0; border-bottom: 1px solid #6a8fbb; background: #fff; font: 15px Lato, sans-serif; }
.expand { display: flex; align-items: center; justify-content: center; width: 20px; border: 1px solid #6a8fbb; border-top: 0; background: linear-gradient(#e8f1fc, #b2cbec); }

/* Worksheet */
.work { display: flex; flex: 1; min-height: 0; }
.sheet { flex: 1; min-width: 0; overflow: hidden; background: #fff; }
table { width: 1394px; table-layout: fixed; border-collapse: separate; border-spacing: 0; font-family: Lato, sans-serif; font-size: 16px; color: #000; }
th, td {
  height: 24px;
  padding: 0 3px;
  line-height: 23px;
  border-right: 1px solid #d0d7e5;
  border-bottom: 1px solid #d0d7e5;
  font-weight: 400;
  white-space: nowrap;
}
td { text-align: right; }
.t td, td.l { text-align: left; }
th { color: #27413e; padding: 0; text-align: center; }
thead th { border-color: #9eb6ce; background: linear-gradient(#f9fcfd, #d3dbe9); width: 80px; }
thead th.sel { background: linear-gradient(#f8d79e, #f1c15f); border-color: #f29536; box-shadow: -1px 0 #f29536; }
tbody th { background: #e4ecf7; border-color: #9eb6ce; }
tbody th.sel { background: #ffd58d; border-color: #f29536; box-shadow: 0 -1px #f29536; }
thead th.corner { width: 34px; padding: 4px 4px 0 14px; background: #a9c4e9; box-shadow: inset 0 0 0 1px #c8daf2; }
td.k { border-right-color: #000; }
td.b { border-bottom-color: #000; }
.tall th, .tall td { height: 25px; }
td.dbl { border-bottom-color: #fff; box-shadow: inset 0 -1px #000; }
td.dbl-under { box-shadow: inset 0 1px #000; }
td.cursor { position: relative; }
td.cursor::before { content: ""; position: absolute; inset: -2px -2px -2px -1px; border: 3px solid #1a1a12; border-left-width: 2px; }
td.cursor::after { content: ""; position: absolute; right: -3px; bottom: -3px; width: 6px; height: 6px; background: #000; border: solid #fff; border-width: 1px 0 0 1px; }

.vscroll { display: flex; flex-direction: column; width: 20px; padding-left: 2px; border-left: 1px solid #9ebfe8; background: linear-gradient(90deg, #6c8dbb, #8fadd8); }
.vscroll button { display: flex; align-items: center; justify-content: center; height: 21px; flex: none; }
.split-h { height: 9px; flex: none; border: 1px solid #6593cf; border-top: 3px solid #fff; background: #fff; box-shadow: inset 0 1px #5080b0; }
.vthumb { display: flex; align-items: center; justify-content: center; flex: 377; border: 1px solid #5a6b90; border-radius: 2px; background: linear-gradient(90deg, #f6f7fb, #d3dae6 50%, #b4c2d6 55%, #d0dbe9); }
.vthumb .grip { width: 8px; height: 8px; background: repeating-linear-gradient(#6a7890 0 1px, #fff 1px 2px); }
.vtrack { flex: 44; }

/* Sheet tabs and horizontal scrolling */
.sheet-bar { display: flex; height: 21px; flex: none; border-bottom: 1px solid #5c7fb4; background: linear-gradient(#7c9fd4, #9cb6dc 30%, #98b2da); }
.sheet-nav { position: relative; z-index: 1; display: flex; align-items: center; justify-content: space-between; width: 79px; padding: 0 8px 0 7px; border: 1px solid #8ba6cf; border-left: 0; background: linear-gradient(#e4eefc, #b4d0f5 50%, #cfe0f8); }
.sheet-tabs { display: flex; position: relative; z-index: 0; font-size: 15px; }
.sheet-tabs button { position: relative; width: 64px; height: 19px; line-height: 20px; }
.sheet-tabs button::before { content: ""; position: absolute; z-index: -1; inset: 0; border: 1px solid #e8f2ff; border-top-color: #7898c8; border-right-color: #7898c8; background: linear-gradient(#d9e7f9, #b5cdef); transform: skewX(-33deg); }
.sheet-tabs .on { font-weight: 700; width: 65px; }
.sheet-tabs .on::before { background: #fff; border-color: #fff; box-shadow: -10px 0 #fff; }
.sheet-tabs .new { width: 32px; padding-left: 7px; }
.hscroll { display: flex; align-items: center; margin-left: auto; width: 557px; padding-right: 20px; background: #7995bf; }
.split-v { width: 8px; height: 18px; flex: none; border: 2px solid #fff; border-right-width: 3px; background: #5c80b8; }
.hscroll > button { display: flex; align-items: center; justify-content: center; width: 21px; height: 20px; flex: none; }
.htrack { flex: 1; height: 19px; padding-right: 62px; }
.hthumb { display: flex; align-items: center; justify-content: center; height: 19px; border: 1px solid #65728e; border-radius: 2px; background: linear-gradient(#fbfbfd, #dfe2ea 45%, #c5cbd9 50%, #d5dce8); }
.hthumb .grip { width: 8px; height: 7px; background: repeating-linear-gradient(90deg, #6a7890 0 1px, #fff 1px 2px); }

/* Status bar */
.status { display: flex; align-items: center; height: 26px; flex: none; padding-right: 5px; border-bottom: 1px solid #3f5877; background: linear-gradient(#dfebfb, #cbdff8 35%, #b2cdf2 40%, #d9e9fc); font-size: 13px; }
.ready { width: 58px; padding-left: 7px; line-height: 22px; border-right: 1px solid #8aaad6; }
.views { display: flex; margin-left: auto; height: 23px; border: 1px solid #6f94c8; border-radius: 2px; background: linear-gradient(#cfe1f8, #a8c6ef); }
.views button { display: flex; align-items: center; justify-content: center; width: 22px; }
.views .on { width: 24px; background: linear-gradient(#fff0b8, #ffc85c); box-shadow: inset 0 0 0 1px #d8a850; }
.pct { width: 48px; font-size: 12px; }
.zoom-btn { width: 20px; }
.zoom { appearance: none; width: 127px; height: 20px; margin: 0; background: linear-gradient(#5579b0, #5579b0) center / 100% 1px no-repeat; }
.zoom::-webkit-slider-thumb { appearance: none; width: 11px; height: 16px; border: 1px solid #496898; border-radius: 1px 1px 5px 5px; background: linear-gradient(90deg, #fff 45%, #8fa9cc 45% 60%, #fff 60%); }

/* Taskbar */
.taskbar { display: flex; align-items: center; height: 48px; flex: none; background: linear-gradient(90deg, #8ba1b9 0, #8ba1b9 70px, #aecbe8 100px, #b2cfeb 57%, #8aa0b6 62%, #899eb4 100%); }
.start { width: 70px; padding-left: 11px; }
.app-btn { display: flex; justify-content: center; width: 70px; }
.running { display: flex; gap: 2px; margin-left: 1px; height: 48px; }
.running button { display: flex; align-items: center; justify-content: center; width: 68px; border: 1px solid #4d6378; border-radius: 3px; background: linear-gradient(120deg, #c8dcec, #a9c7e2); box-shadow: inset 0 0 0 1px #d5e6f4; }
.running .front { background: linear-gradient(120deg, #eaf2fa, #c5daee); }
.tray { display: flex; align-items: center; margin-left: auto; color: #fff; font-size: 13px; font-family: "Open Sans", "Noto Sans", sans-serif; }
.lang { width: 38px; padding-bottom: 4px; }
.tray-icons { display: flex; gap: 10px; }
.tray-icons svg { width: 20px; height: 20px; }
.clock { display: flex; flex-direction: column; align-items: center; width: 105px; padding-left: 6px; font-size: 14px; line-height: 22px; }
.desktop { width: 14px; height: 47px; border: 1px solid #5c6e82; background: linear-gradient(#a8b8c8, #7890a6 50%, #93b4cc); }
```
